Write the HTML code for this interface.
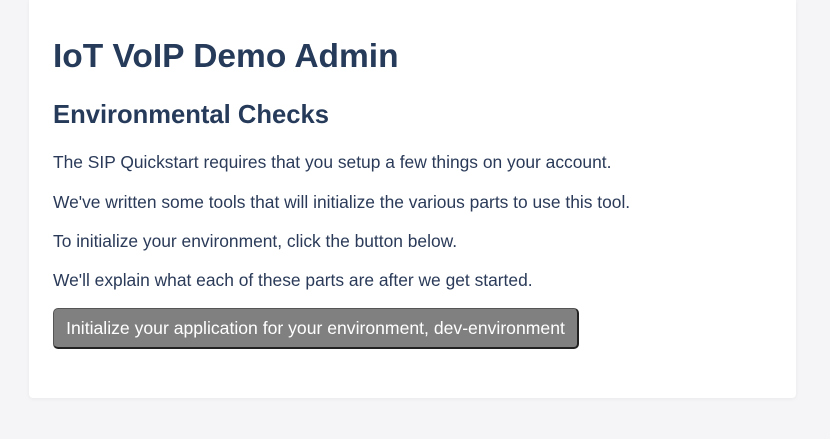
<!DOCTYPE html>
<html><head><style>
html,body{margin:0;padding:0;}
body{width:830px;height:439px;background:#f5f5f7;font-family:"Liberation Sans",sans-serif;position:relative;overflow:hidden;}
.card{position:absolute;left:29px;top:0;width:767px;height:398px;background:#fff;border-radius:0 0 4px 4px;box-shadow:0 1px 4px rgba(0,0,0,0.05);}
.t{position:absolute;left:53px;color:#263a5a;white-space:nowrap;}
h1{margin:0;font-size:33.5px;font-weight:bold;}
h2{margin:0;font-size:25.6px;font-weight:bold;}
p{margin:0;font-size:17.4px;color:#2a3a58;}
.btn{position:absolute;left:53px;top:308px;width:523px;height:38px;background:#808080;border:1px solid #555;border-bottom:2px solid #222;border-right:2px solid #222;border-radius:5px;color:#fff;font-size:17.6px;line-height:38px;text-align:center;box-sizing:content-box;}
</style></head><body>
<div class="card"></div>
<div class="t" style="top:38px"><h1>IoT VoIP Demo Admin</h1></div>
<div class="t" style="top:101px"><h2>Environmental Checks</h2></div>
<div class="t" style="top:152px"><p>The SIP Quickstart requires that you setup a few things on your account.</p></div>
<div class="t" style="top:192px"><p>We've written some tools that will initialize the various parts to use this tool.</p></div>
<div class="t" style="top:231px"><p>To initialize your environment, click the button below.</p></div>
<div class="t" style="top:270px"><p>We'll explain what each of these parts are after we get started.</p></div>
<div class="btn">Initialize your application for your environment, dev-environment</div>
</body></html>
